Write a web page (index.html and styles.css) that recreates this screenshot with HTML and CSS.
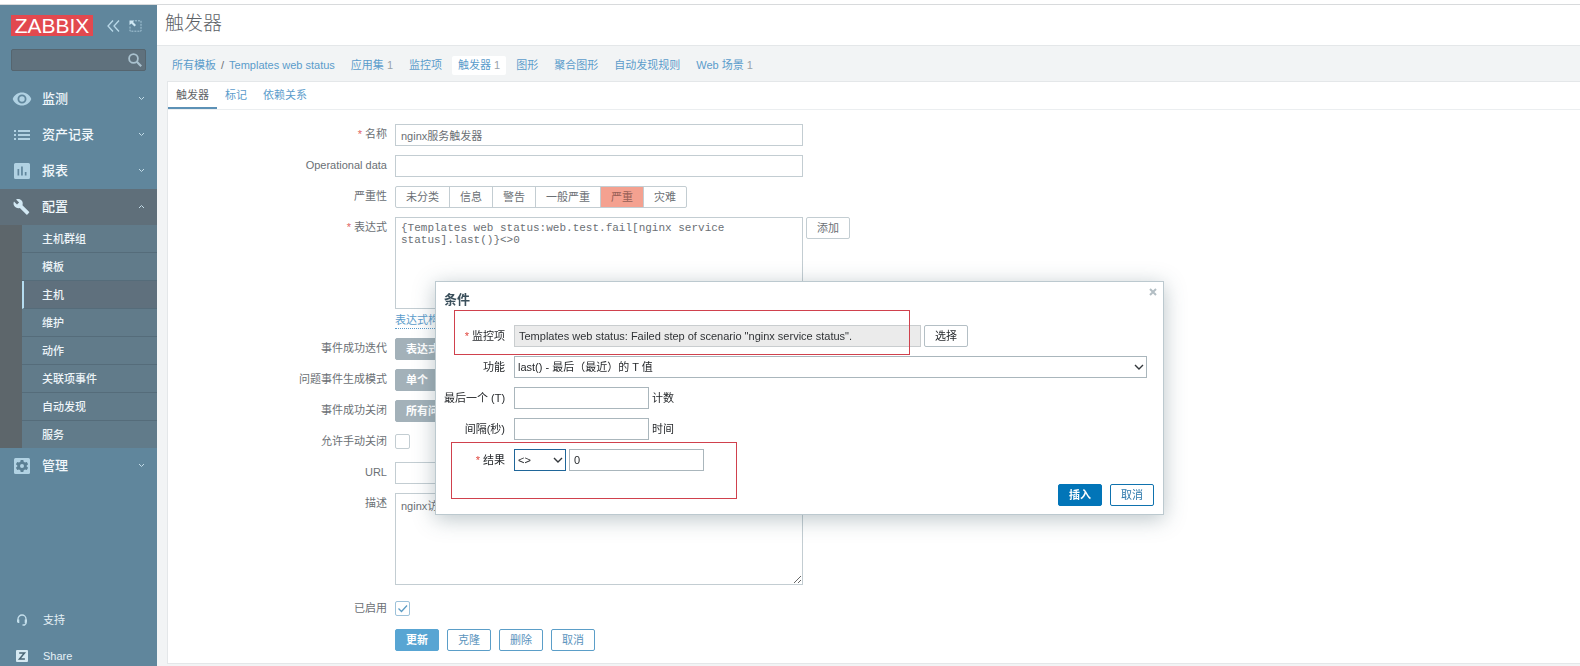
FILE: index.html
```html
<!DOCTYPE html>
<html lang="zh-CN">
<head>
<meta charset="utf-8">
<title>触发器</title>
<link rel="stylesheet" href="styles.css">
</head>
<body>
<aside class="sidebar">
  <div class="brand">
    <a class="logo" href="#">ZABBIX</a>
    <button class="icon-btn" type="button" aria-label="收起"><svg width="13" height="12" viewBox="0 0 13 12"><path d="M6 .5 1 6l5 5.500M12 .5 7 6l5 5.500" fill="none" stroke="#b9d9e9" stroke-width="1.300"/></svg></button>
    <button class="icon-btn" type="button" aria-label="隐藏"><svg width="13" height="12" viewBox="0 0 13 12"><path d="M6 .8h6v10.400H1V6" fill="none" stroke="#a5c6d7" stroke-dasharray="2 1"/><path d="M.5.5h5L4 2l3 3-1.500 1.500-3-3L.5 5z" fill="#cfe8f4"/></svg></button>
  </div>
  <form class="search">
    <input type="text" aria-label="搜索">
    <button type="button" aria-label="搜索"><svg width="14" height="14" viewBox="0 0 14 14"><circle cx="5.500" cy="5.500" r="4.400" fill="none" stroke="#a9c1ce" stroke-width="1.800"/><path d="m8.800 8.800 4.400 4.400" stroke="#a9c1ce" stroke-width="2.200"/></svg></button>
  </form>
  <nav class="menu">
    <a class="menu-item" href="#"><svg class="menu-icon" viewBox="0 0 20 20"><path d="M10 3.500C5.800 3.500 2.200 6.100.7 10c1.500 3.900 5.100 6.500 9.300 6.500s7.800-2.600 9.300-6.500C17.800 6.100 14.200 3.500 10 3.500zm0 11a4.500 4.500 0 1 1 0-9 4.500 4.500 0 0 1 0 9zm0-7.200a2.700 2.700 0 1 0 0 5.400 2.700 2.700 0 0 0 0-5.400z" fill-rule="evenodd"/></svg><span>监测</span><svg class="chev" viewBox="0 0 7 7"><path d="m1 2 2.500 2.500L6 2"/></svg></a>
    <a class="menu-item" href="#"><svg class="menu-icon" viewBox="0 0 20 20"><path d="M2 5h2v2H2zm4 0h12v2H6zM2 9h2v2H2zm4 0h12v2H6zm-4 4h2v2H2zm4 0h12v2H6z"/></svg><span>资产记录</span><svg class="chev" viewBox="0 0 7 7"><path d="m1 2 2.500 2.500L6 2"/></svg></a>
    <a class="menu-item" href="#"><svg class="menu-icon" viewBox="0 0 20 20"><path d="M3.500 2h13A1.500 1.500 0 0 1 18 3.500v13a1.500 1.500 0 0 1-1.500 1.500h-13A1.500 1.500 0 0 1 2 16.500v-13A1.500 1.500 0 0 1 3.500 2zM5.500 8v6.500h1.700V8zm3.600-2.500v9h1.700v-9zm3.700 5.500v3.500h1.700V11z" fill-rule="evenodd"/></svg><span>报表</span><svg class="chev" viewBox="0 0 7 7"><path d="m1 2 2.500 2.500L6 2"/></svg></a>
    <a class="menu-item open" href="#"><svg class="menu-icon" viewBox="-1 -1 22 22"><path d="M17.700 15.300 10.500 8.100c.7-1.800.3-3.900-1.200-5.400C7.700 1.100 5.400.8 3.500 1.700l3.300 3.300-2.300 2.300-3.300-3.300C.2 5.900.6 8.200 2.200 9.800c1.500 1.500 3.600 1.900 5.400 1.200l7.200 7.200c.3.300.8.300 1.100 0l1.800-1.800c.4-.3.400-.8 0-1.100z"/></svg><span>配置</span><svg class="chev" viewBox="0 0 7 7"><path d="m1 5 2.500-2.500L6 5"/></svg></a>
    <div class="submenu">
      <a href="#">主机群组</a><a href="#">模板</a><a class="current" href="#">主机</a><a href="#">维护</a><a href="#">动作</a><a href="#">关联项事件</a><a href="#">自动发现</a><a href="#">服务</a>
    </div>
    <a class="menu-item" href="#"><svg class="menu-icon" viewBox="0 0 20 20"><rect x="2" y="2" width="16" height="16" rx="1.500"/><path d="M8.700 4h2.600l.4 1.800 1.300.8 1.800-.6 1.300 2.300L14.700 9.500v1l1.400 1.200-1.300 2.300-1.800-.6-1.300.8-.4 1.800H8.700l-.4-1.800-1.300-.8-1.800.6-1.300-2.300 1.400-1.200v-1L3.900 8.300 5.200 6l1.800.6 1.300-.8zM10 8a2 2 0 1 0 0 4 2 2 0 0 0 0-4z" fill="#5b7f93" fill-rule="evenodd"/></svg><span>管理</span><svg class="chev" viewBox="0 0 7 7"><path d="m1 2 2.500 2.500L6 2"/></svg></a>
  </nav>
  <nav class="links">
    <a href="#"><svg width="12" height="12" viewBox="0 0 12 12"><path d="M2 7V5a4 4 0 0 1 8 0v4.500L8.500 11H6.500" fill="none" stroke="#c4dfec" stroke-width="1.300"/><path d="M1 5.500h2.300v3.500H2L1 8zM8.700 5.500H11V8l-1 1H8.700z" fill="#c4dfec"/></svg><span>支持</span></a>
    <a href="#"><svg width="12" height="12" viewBox="0 0 12 12"><rect width="12" height="12" rx="1" fill="#d5e9f2"/><path d="M3.200 3h5.300L3.500 9h5.400" fill="none" stroke="#4a6675" stroke-width="1.500"/></svg><span>Share</span></a>
  </nav>
</aside>

<main class="page">
  <header class="page-head"><h1>触发器</h1></header>
  <nav class="crumbs">
    <span class="path"><a href="#">所有模板</a><span>/</span><a href="#">Templates web status</a></span>
    <a href="#">应用集 <sup>1</sup></a>
    <a href="#">监控项</a>
    <a class="selected" href="#">触发器 <sup>1</sup></a>
    <a href="#">图形</a>
    <a href="#">聚合图形</a>
    <a href="#">自动发现规则</a>
    <a href="#">Web 场景 <sup>1</sup></a>
  </nav>
  <section class="card">
    <nav class="tabs"><a class="active" href="#">触发器</a><a href="#">标记</a><a href="#">依赖关系</a></nav>
    <form class="form">
      <label class="req" for="name">名称</label>
      <div class="field"><input class="box wide" id="name" type="text" value="nginx服务触发器"></div>
      <label for="opdata">Operational data</label>
      <div class="field"><input class="box wide" id="opdata" type="text"></div>
      <span class="label">严重性</span>
      <div class="field"><div class="severity">
        <label><input type="radio" name="sev">未分类</label><label><input type="radio" name="sev">信息</label><label><input type="radio" name="sev">警告</label><label><input type="radio" name="sev">一般严重</label><label><input type="radio" name="sev" checked>严重</label><label><input type="radio" name="sev">灾难</label>
      </div></div>
      <label class="req" for="expr">表达式</label>
      <div class="field stack">
        <div class="field"><textarea class="box wide area mono" id="expr">{Templates web status:web.test.fail[nginx service status].last()}&lt;&gt;0</textarea><button class="btn plain" type="button">添加</button></div>
        <a class="dotted" href="#">表达式构造器</a>
      </div>
      <span class="label">事件成功迭代</span>
      <div class="field"><button class="btn toggle" type="button">表达式</button></div>
      <span class="label">问题事件生成模式</span>
      <div class="field"><button class="btn toggle" type="button">单个</button></div>
      <span class="label">事件成功关闭</span>
      <div class="field"><button class="btn toggle" type="button">所有问题</button></div>
      <label for="manual">允许手动关闭</label>
      <div class="field"><input class="check" id="manual" type="checkbox"></div>
      <label for="url">URL</label>
      <div class="field"><input class="box wide" id="url" type="text"></div>
      <label for="desc">描述</label>
      <div class="field desc"><textarea class="box wide area resizable" id="desc">nginx访问</textarea></div>
      <label for="enabled">已启用</label>
      <div class="field"><span class="check-wrap"><input class="check" id="enabled" type="checkbox" checked><svg viewBox="0 0 15 15"><path d="m3.500 7.500 3 3 5.500-6" fill="none" stroke="#5d9cc4" stroke-width="1.300"/></svg></span></div>
      <div class="field actions"><button class="btn primary" type="button">更新</button><button class="btn" type="button">克隆</button><button class="btn" type="button">删除</button><button class="btn" type="button">取消</button></div>
    </form>
  </section>
</main>

<section class="dialog" role="dialog" aria-labelledby="dlg-title">
  <button class="close" type="button" aria-label="关闭"><svg width="8" height="8" viewBox="0 0 8 8"><path d="m1 1 6 6M7 1 1 7" stroke="#b3bec4" stroke-width="2"/></svg></button>
  <h2 id="dlg-title">条件</h2>
  <form class="dialog-form">
    <label class="req" for="item">监控项</label>
    <div class="field"><input class="box item" id="item" type="text" readonly value="Templates web status: Failed step of scenario &quot;nginx service status&quot;."><button class="btn plain" type="button">选择</button></div>
    <label for="func">功能</label>
    <div class="field"><span class="select full"><select id="func"><option>last() - 最后（最近）的 T 值</option></select><svg viewBox="0 0 10 6"><path d="m1 1 4 4 4-4"/></svg></span></div>
    <label for="lastt">最后一个 (T)</label>
    <div class="field"><input class="box short" id="lastt" type="text"><span>计数</span></div>
    <label for="shift">间隔(秒)</label>
    <div class="field"><input class="box short" id="shift" type="text"><span>时间</span></div>
    <label class="req" for="op">结果</label>
    <div class="field"><span class="select op"><select id="op"><option>&lt;&gt;</option></select><svg viewBox="0 0 10 6"><path d="m1 1 4 4 4-4"/></svg></span><input class="box short" type="text" aria-label="结果" value="0"></div>
  </form>
  <div class="dialog-actions"><button class="btn primary" type="button">插入</button><button class="btn" type="button">取消</button></div>
  <div class="mark mark-item"></div>
  <div class="mark mark-result"></div>
</section>
</body>
</html>
```
FILE: styles.css
```css
* { box-sizing: border-box; }
html { height: 100%; }
body {
  margin: 0;
  height: 100%;
  display: flex;
  background: #f2f4f5;
  color: #6b7075;
  font: 11px/16px "Liberation Sans", "Noto Sans CJK SC", sans-serif;
  overflow: hidden;
}
body::before {
  content: "";
  position: absolute;
  top: 0; left: 0; right: 0;
  height: 4px;
  background: #fff;
  border-bottom: 1px solid #d8dadc;
}
a { color: #5b9ccb; text-decoration: none; }
input, textarea, select, button { font: inherit; color: inherit; margin: 0; }
button { cursor: pointer; }

/* Sidebar */
.sidebar {
  width: 157px;
  flex: none;
  margin-top: 4px;
  background: #60869c;
  display: flex;
  flex-direction: column;
}
.brand { display: flex; align-items: center; gap: 9px; padding: 11px 11px 0; }
.logo {
  width: 82px;
  height: 21px;
  margin-right: 5px;
  background: #e2494f;
  color: #fff;
  font-size: 21px;
  line-height: 21px;
  text-align: center;
}
.icon-btn { display: flex; padding: 0; border: 0; background: none; }
.search {
  display: flex;
  align-items: center;
  margin: 13px 11px 0;
  height: 22px;
  border: 1px solid #55656f;
  border-radius: 2px;
  background: #5f717d;
}
.search input { flex: 1; min-width: 0; border: 0; background: none; outline: 0; color: #fff; }
.search button { display: flex; padding: 0 3px; border: 0; background: none; }
.menu { margin-top: 10px; }
.menu-item {
  display: flex;
  align-items: center;
  height: 36px;
  padding: 0 12px 1px;
  color: #f0f7fb;
  font-size: 13px;
  font-weight: 500;
}
.menu-item span { flex: 1; }
.menu-icon { width: 20px; height: 20px; margin-right: 10px; fill: #b1d2e3; }
.chev { width: 7px; height: 7px; }
.chev path { fill: none; stroke: #c3dce8; }
.open { background: #5f6f7a; }
.open .menu-icon { fill: #d3e9f4; }
.submenu { border-left: 22px solid #5d666b; background: #617b8a; }
.submenu a {
  display: block;
  height: 28px;
  padding-left: 20px;
  line-height: 28px;
  color: #edf4f8;
  font-weight: 500;
  border-bottom: 1px solid #556c7a;
}
.submenu a:last-child { height: 27px; border-bottom: 0; }
.submenu .current { background: #5f707d; border-left: 2px solid #b5dcf0; padding-left: 18px; }
.links { margin-top: auto; display: flex; flex-direction: column; gap: 16px; }
.links a { display: flex; align-items: center; gap: 15px; height: 20px; padding-left: 16px; color: #e5f0f6; }

/* Page */
.page { flex: 1; min-width: 0; margin-top: 4px; }
.page-head { height: 42px; background: #fff; border-bottom: 1px solid #e4e7e9; padding: 0 8px; }
h1 { margin: 0; font-size: 19px; line-height: 40px; font-weight: 300; color: #5c6166; }
.crumbs { display: flex; align-items: center; gap: 4px; height: 35px; padding: 3px 9px 0; }
.crumbs > * { padding: 0 6px; border-radius: 2px; line-height: 19px; }
.crumbs .selected { background: #fff; }
.crumbs sup { font-size: inherit; line-height: inherit; vertical-align: baseline; color: #9aa3a9; }
.path { display: flex; gap: 5px; }
.card { margin-left: 10px; background: #fff; border: 1px solid #e4e7e9; border-right: 0; }
.tabs { display: flex; height: 28px; border-bottom: 1px solid #ebeef0; }
.tabs a { padding: 0 8px; line-height: 26px; }
.tabs .active { color: #5f6468; border-bottom: 2px solid #5c91b6; }
.form {
  display: grid;
  grid-template-columns: 219px 1fr;
  gap: 9px 8px;
  padding: 14px 0 12px;
}
.form > label, .form > .label, .dialog-form > label { text-align: right; line-height: 20px; }
.req::before { content: "* "; color: #e0635f; }
.field { display: flex; align-items: flex-start; gap: 3px; min-height: 22px; }
.stack { flex-direction: column; gap: 4px; }
.box { height: 22px; padding: 0 5px; border: 1px solid #c3cdd2; background: #fff; outline: 0; }
.wide { width: 408px; }
.area { display: block; height: 92px; padding: 4px 5px; resize: none; }
.resizable { resize: vertical; }
.mono { font: 11px/12px "Liberation Mono", monospace; }
.dotted { line-height: 15px; border-bottom: 1px dotted #5b9ccb; }
.severity { display: flex; border: 1px solid #c3cdd2; border-radius: 2px; }
.severity label { padding: 0 10px; line-height: 20px; border-right: 1px solid #c3cdd2; }
.severity label:last-child { border-right: 0; }
.severity input { position: absolute; opacity: 0; width: 0; height: 0; }
.severity label:has(:checked) { background: #f4a190; color: #965f56; }
.btn {
  height: 22px;
  padding: 0 10px;
  border: 1px solid #5b9ec8;
  border-radius: 2px;
  background: #fff;
  color: #5b94bd;
  line-height: 20px;
}
.btn.plain { border-color: #c3cdd2; color: #6b7075; }
.btn.toggle { background: #a3b1b9; border-color: #a3b1b9; color: #fff; font-weight: 700; }
.btn.primary { background: #58a5d3; border-color: #58a5d3; color: #fff; font-weight: 700; }
.check { appearance: none; display: block; width: 15px; height: 15px; border: 1px solid #c3cdd2; border-radius: 2px; background: #fff; }
.field > .check, .check-wrap { margin-top: 3px; }
.check-wrap { position: relative; }
.check-wrap .check { border-color: #9dc2da; }
.check-wrap svg { position: absolute; inset: 0; pointer-events: none; }
.desc { padding-bottom: 4px; }
.actions { grid-column: 2; gap: 8px; }

/* Dialog */
.dialog {
  position: fixed;
  left: 435px;
  top: 281px;
  width: 729px;
  padding: 9px 9px 8px 8px;
  background: #fff;
  border: 1px solid #bcc9cf;
  box-shadow: 0 4px 20px rgba(60, 90, 100, 0.35);
  color: #26292c;
}
.dialog h2 { margin: 0; font-size: 13px; line-height: 18px; color: #3a4f5b; }
.close { position: absolute; top: 6px; right: 6px; display: flex; padding: 0; border: 0; background: none; }
.dialog-form { display: grid; grid-template-columns: 61px 1fr; gap: 9px; padding-top: 16px; }
.dialog-form > label { white-space: nowrap; line-height: 22px; }
.dialog .req::before { color: #e0443c; }
.dialog .box { padding: 0 4px; border-color: #aab6bc; }
.dialog .item { width: 407px; background: #ebebeb; border-color: #c9cdcf; color: #303336; }
.dialog .field > span:not(.select) { line-height: 22px; }
.short { width: 135px; }
.select { position: relative; display: flex; height: 22px; }
.select select { appearance: none; width: 100%; padding: 0 3px; border: 1px solid #aab6bc; border-radius: 0; background: #fff; outline: 0; }
.select svg { position: absolute; right: 3px; top: 8px; width: 10px; height: 6px; pointer-events: none; }
.select svg path { fill: none; stroke: #33383c; stroke-width: 1.4; }
.full { width: 633px; }
.op { width: 52px; }
.op select { border-color: #1f6699; }
.dialog .btn { border-color: #0f72ae; color: #2a77ab; }
.dialog .btn.plain { border-color: #b4bfc5; color: #26292c; }
.dialog .btn.primary { background: #0275b8; border-color: #0275b8; color: #fff; }
.dialog-actions { display: flex; justify-content: flex-end; gap: 8px; padding-top: 13px; }
.mark { position: absolute; border: 1px solid #d0414d; pointer-events: none; }
.mark-item { left: 18px; top: 28px; width: 456px; height: 45px; }
.mark-result { left: 15px; top: 160px; width: 286px; height: 57px; }
```
